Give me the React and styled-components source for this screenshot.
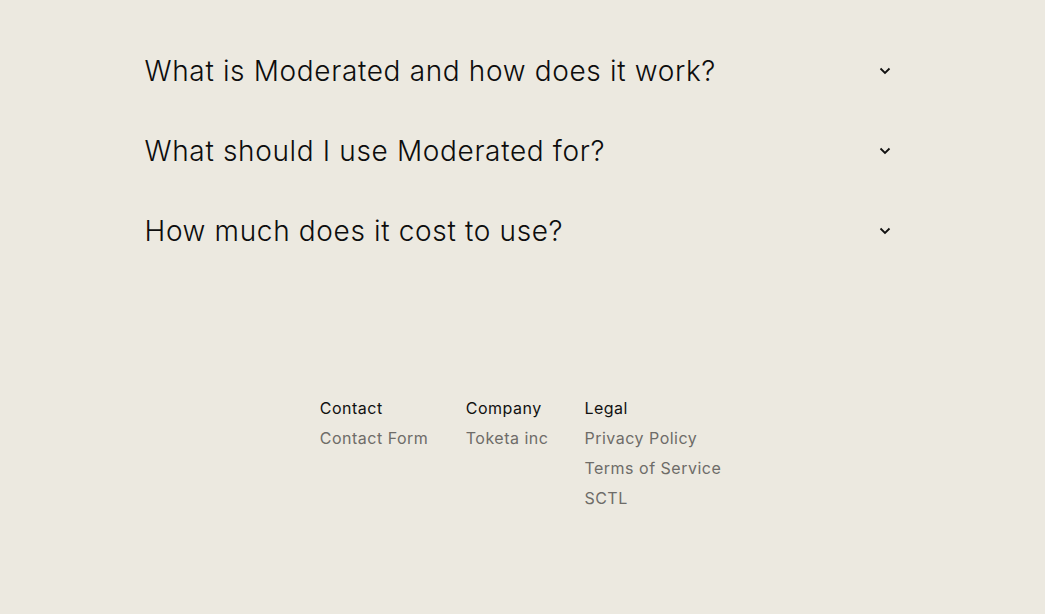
import React from 'react';
import styled, { createGlobalStyle } from 'styled-components';

const GlobalStyle = createGlobalStyle`
  html, body {
    margin: 0;
    background: #ece9e0;
    font-family: Inter, "Liberation Sans", sans-serif;
  }
`;

const Page = styled.div`
  min-height: 614px;
  background: #ece9e0;
  padding-top: 31px;
  box-sizing: border-box;
`;

const Faq = styled.div`
  width: 756px;
  margin: 0 auto;
`;

const Row = styled.div`
  display: flex;
  align-items: center;
  justify-content: space-between;
  height: 80px;
  padding-right: 10px;
`;

const Question = styled.h3`
  margin: 0;
  font-size: 28px;
  font-weight: 300;
  color: #0d0d0d;
  letter-spacing: 0.65px;
`;

const Chevron = () => (
  <svg width="12" height="8" viewBox="0 0 12 8" fill="none">
    <path d="M1.5 1.5L6 6L10.5 1.5" stroke="#111" strokeWidth="1.8" />
  </svg>
);

const Footer = styled.footer`
  display: flex;
  justify-content: center;
  gap: 36px;
  margin-top: 122px;
  padding-right: 4px;
`;

const Col = styled.div`
  display: flex;
  flex-direction: column;
  min-width: ${(p) => p.$min || 0}px;
`;

const ColTitle = styled.div`
  font-size: 16px;
  line-height: 30px;
  color: #111;
  letter-spacing: 0.5px;
`;

const ColLink = styled.a`
  font-size: 16px;
  line-height: 30px;
  color: #6e6c68;
  text-decoration: none;
  letter-spacing: 0.5px;
`;

const questions = [
  'What is Moderated and how does it work?',
  'What should I use Moderated for?',
  'How much does it cost to use?',
];

const columns = [
  { title: 'Contact', links: ['Contact Form'], min: 110 },
  { title: 'Company', links: ['Toketa inc'] },
  { title: 'Legal', links: ['Privacy Policy', 'Terms of Service', 'SCTL'] },
];

export default function App() {
  return (
    <Page>
      <GlobalStyle />
      <Faq>
        {questions.map((q) => (
          <Row key={q}>
            <Question>{q}</Question>
            <Chevron />
          </Row>
        ))}
      </Faq>
      <Footer>
        {columns.map((c) => (
          <Col key={c.title} $min={c.min}>
            <ColTitle>{c.title}</ColTitle>
            {c.links.map((l) => (
              <ColLink key={l} href="#">{l}</ColLink>
            ))}
          </Col>
        ))}
      </Footer>
    </Page>
  );
}
